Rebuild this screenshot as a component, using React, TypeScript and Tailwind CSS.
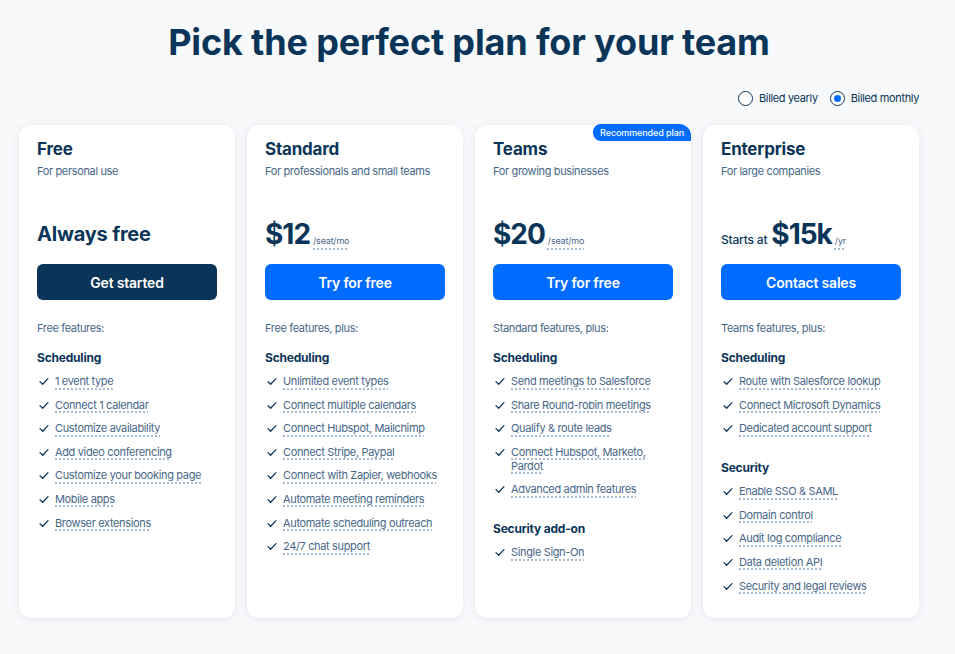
type Section = { title: string; items: string[] };

type Plan = {
  name: string;
  tagline: string;
  price: React.ReactNode;
  cta: string;
  dark?: boolean;
  badge?: string;
  intro: string;
  sections: Section[];
};

function Check() {
  return (
    <svg viewBox="0 0 12 10" className="mt-[3px] h-[9px] w-[10px] shrink-0" fill="none">
      <path d="M1.2 5.2 4.4 8.3 10.8 1.6" stroke="#0b3558" strokeWidth="1.5" strokeLinecap="round" strokeLinejoin="round" />
    </svg>
  );
}

function Unit({ children }: { children: string }) {
  return (
    <span className="text-[9px] leading-none tracking-[-0.2px] text-[#476788] underline decoration-dotted decoration-[#a6bbd1] decoration-[1.5px] underline-offset-[4px]">
      {children}
    </span>
  );
}

const plans: Plan[] = [
  {
    name: "Free",
    tagline: "For personal use",
    price: <span className="mb-[4px] text-[20px] font-bold leading-none tracking-[-0.2px] text-[#0b3558]">Always free</span>,
    cta: "Get started",
    dark: true,
    intro: "Free features:",
    sections: [
      {
        title: "Scheduling",
        items: [
          "1 event type",
          "Connect 1 calendar",
          "Customize availability",
          "Add video conferencing",
          "Customize your booking page",
          "Mobile apps",
          "Browser extensions",
        ],
      },
    ],
  },
  {
    name: "Standard",
    tagline: "For professionals and small teams",
    price: (
      <>
        <span className="text-[28px] font-bold leading-none tracking-[-1px] text-[#0b3558]">$12</span>
        <Unit>/seat/mo</Unit>
      </>
    ),
    cta: "Try for free",
    intro: "Free features, plus:",
    sections: [
      {
        title: "Scheduling",
        items: [
          "Unlimited event types",
          "Connect multiple calendars",
          "Connect Hubspot, Mailchimp",
          "Connect Stripe, Paypal",
          "Connect with Zapier, webhooks",
          "Automate meeting reminders",
          "Automate scheduling outreach",
          "24/7 chat support",
        ],
      },
    ],
  },
  {
    name: "Teams",
    tagline: "For growing businesses",
    price: (
      <>
        <span className="text-[28px] font-bold leading-none tracking-[-1px] text-[#0b3558]">$20</span>
        <Unit>/seat/mo</Unit>
      </>
    ),
    cta: "Try for free",
    badge: "Recommended plan",
    intro: "Standard features, plus:",
    sections: [
      {
        title: "Scheduling",
        items: [
          "Send meetings to Salesforce",
          "Share Round-robin meetings",
          "Qualify & route leads",
          "Connect Hubspot, Marketo, Pardot",
          "Advanced admin features",
        ],
      },
      { title: "Security add-on", items: ["Single Sign-On"] },
    ],
  },
  {
    name: "Enterprise",
    tagline: "For large companies",
    price: (
      <>
        <span className="mr-[1px] text-[12px] font-medium leading-none tracking-[-0.2px] text-[#0b3558]">Starts at</span>
        <span className="text-[28px] font-bold leading-none tracking-[-1px] text-[#0b3558]">$15k</span>
        <Unit>/yr</Unit>
      </>
    ),
    cta: "Contact sales",
    intro: "Teams features, plus:",
    sections: [
      {
        title: "Scheduling",
        items: ["Route with Salesforce lookup", "Connect Microsoft Dynamics", "Dedicated account support"],
      },
      {
        title: "Security",
        items: [
          "Enable SSO & SAML",
          "Domain control",
          "Audit log compliance",
          "Data deletion API",
          "Security and legal reviews",
        ],
      },
    ],
  },
];

function Radio({ checked, label }: { checked?: boolean; label: string }) {
  return (
    <label className="flex items-center gap-[6px]">
      <span className="flex h-[15px] w-[15px] items-center justify-center rounded-full border-[1.5px] border-[#0b3558] bg-white">
        {checked && <span className="h-[7px] w-[7px] rounded-full bg-[#006bff]" />}
      </span>
      <span className="text-[11px] leading-[16px] tracking-[-0.35px] text-[#0b3558]">{label}</span>
    </label>
  );
}

function PlanCard({ plan }: { plan: Plan }) {
  return (
    <div className="relative rounded-[12px] bg-white px-[18px] pb-[25px] pt-[12px] shadow-[0_1px_8px_rgba(71,103,136,0.12)]">
      {plan.badge && (
        <div className="absolute right-0 top-[-1px] rounded-bl-[8px] rounded-tl-[8px] rounded-tr-[12px] bg-[#006bff] px-[7px] text-[9px] font-medium leading-[17px] tracking-[-0.1px] text-white">
          {plan.badge}
        </div>
      )}
      <div className="text-[17px] font-bold leading-[24px] tracking-[-0.2px] text-[#0b3558]">{plan.name}</div>
      <div className="mt-[2px] text-[11px] leading-[16px] tracking-[-0.35px] text-[#476788]">{plan.tagline}</div>
      <div className="mt-[29px] flex h-[40px] items-end">
        <div className="flex items-baseline gap-[3px]">{plan.price}</div>
      </div>
      <button
        className={
          "mt-[16px] h-[36px] w-full rounded-[6px] text-[14px] font-semibold tracking-[-0.2px] text-white " +
          (plan.dark ? "bg-[#0b3558]" : "bg-[#006bff]")
        }
      >
        {plan.cta}
      </button>
      <div className="mt-[20px] text-[11px] leading-[16px] tracking-[-0.35px] text-[#476788]">{plan.intro}</div>
      {plan.sections.map((s, i) => (
        <div key={s.title} className={i === 0 ? "mt-[14px]" : "mt-[25px]"}>
          <div className="text-[12px] font-bold leading-[16px] tracking-[-0.2px] text-[#0b3558]">{s.title}</div>
          <ul className="mt-[8px] flex flex-col gap-[9.6px] pl-[2px]">
            {s.items.map((item) => (
              <li key={item} className="flex items-start gap-[6px]">
                <Check />
                <span className="text-[11px] leading-[14px] tracking-[-0.35px] text-[#476788] underline decoration-dotted decoration-[#a6bbd1] decoration-[1.5px] underline-offset-[3px]">
                  {item}
                </span>
              </li>
            ))}
          </ul>
        </div>
      ))}
    </div>
  );
}

export default function App() {
  return (
    <div className="min-h-[654px] bg-[#f8f9fb] pt-[20px] font-['Inter',sans-serif]">
      <div className="ml-[19px] w-[900px]">
        <h1 className="text-center text-[36px] font-bold leading-[44px] tracking-[-0.15px] text-[#0b3558]">
          Pick the perfect plan for your team
        </h1>
        <div className="mt-[26px] flex justify-end gap-[12px]">
          <Radio label="Billed yearly" />
          <Radio checked label="Billed monthly" />
        </div>
        <div className="mt-[19px] grid grid-cols-4 gap-[12px]">
          {plans.map((p) => (
            <PlanCard key={p.name} plan={p} />
          ))}
        </div>
      </div>
    </div>
  );
}
